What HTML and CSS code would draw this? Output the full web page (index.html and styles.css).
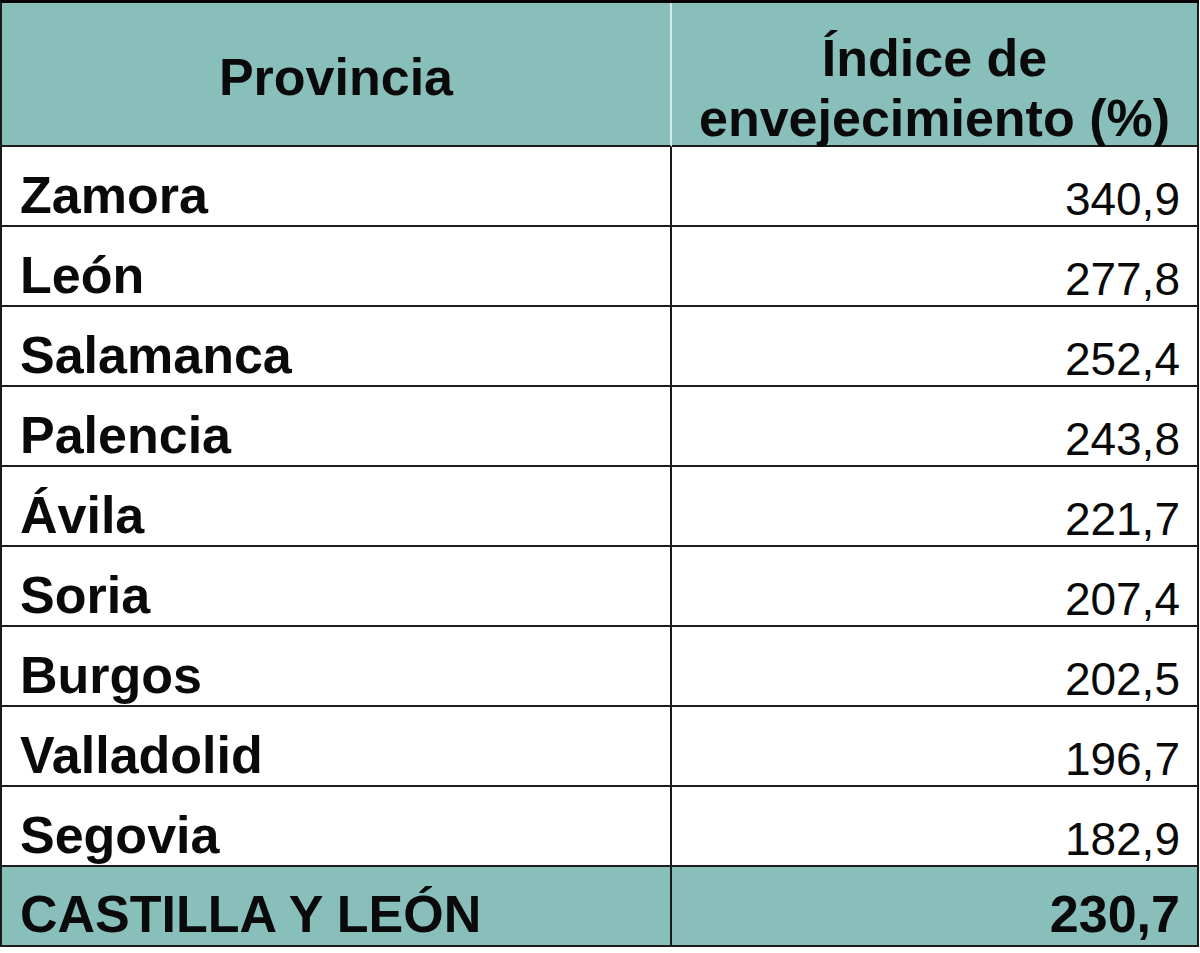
FILE: index.html
```html
<!DOCTYPE html>
<html lang="es">
<head>
<meta charset="utf-8">
<title>Índice de envejecimiento</title>
<link rel="stylesheet" href="styles.css">
</head>
<body>
<div class="table">
  <div class="cell head c1"><span class="head-one">Provincia</span></div>
  <div class="cell head c2"><span class="head-two">Índice de<br>envejecimiento (%)</span></div>

  <div class="cell row c1 name">Zamora</div><div class="cell row c2 num">340,9</div>
  <div class="cell row c1 name">León</div><div class="cell row c2 num">277,8</div>
  <div class="cell row c1 name">Salamanca</div><div class="cell row c2 num">252,4</div>
  <div class="cell row c1 name">Palencia</div><div class="cell row c2 num">243,8</div>
  <div class="cell row c1 name">Ávila</div><div class="cell row c2 num">221,7</div>
  <div class="cell row c1 name">Soria</div><div class="cell row c2 num">207,4</div>
  <div class="cell row c1 name">Burgos</div><div class="cell row c2 num">202,5</div>
  <div class="cell row c1 name">Valladolid</div><div class="cell row c2 num">196,7</div>
  <div class="cell row c1 name">Segovia</div><div class="cell row c2 num">182,9</div>

  <div class="cell total c1 name">CASTILLA Y LEÓN</div><div class="cell total c2 num total-num">230,7</div>
</div>
</body>
</html>
```

FILE: styles.css
```css
html, body {
  margin: 0;
  padding: 0;
  background: #ffffff;
}

body {
  font-family: "Liberation Sans", Arial, sans-serif;
  color: #0a0a0a;
}

.table {
  display: grid;
  grid-template-columns: 670px 527px;
  width: 1199px;
  box-sizing: border-box;
  border-top: 3px solid #050505;
  border-left: 2px solid #1a1a1a;
}

.cell {
  box-sizing: border-box;
  border-bottom: 2px solid #1c1c1c;
  border-right: 2px solid #1a1a1a;
  white-space: nowrap;
}

.head {
  height: 144px;
  background: #89bfbb;
  font-weight: bold;
  font-size: 52px;
  text-align: center;
}

.head.c1 {
  border-right-color: #d3ebe9;
  padding-top: 48px;
  line-height: 52px;
}

.head.c2 {
  padding-top: 25px;
  line-height: 60px;
}

.row, .total {
  height: 80px;
}

.name {
  font-weight: bold;
  font-size: 52px;
  line-height: 52px;
  padding-left: 18px;
  padding-top: 22px;
}

.num {
  font-size: 46px;
  line-height: 52px;
  text-align: right;
  padding-right: 17px;
  padding-top: 26px;
}

.total {
  background: #89bfbb;
}

.total.name {
  padding-top: 21px;
}

.total-num {
  font-weight: bold;
  font-size: 52px;
  padding-top: 21px;
}
```
